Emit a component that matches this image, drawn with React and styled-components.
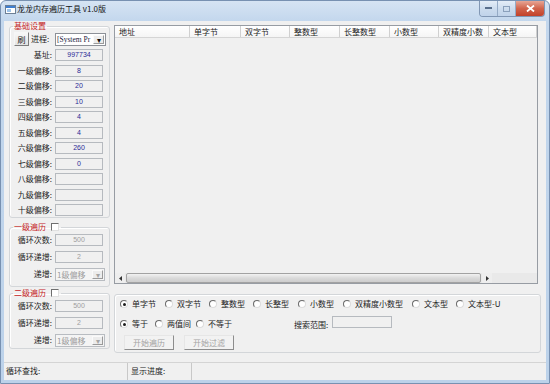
import React from "react";
import styled, { createGlobalStyle } from "styled-components";

const GlobalStyle = createGlobalStyle`
  html, body {
    margin: 0;
    padding: 0;
    width: 550px;
    height: 384px;
    overflow: hidden;
  }
  body {
    font-family: "Noto Sans CJK SC", "Liberation Sans", sans-serif;
    font-size: 8px;
    color: #1c1c1c;
  }
`;

const offsets = [
  ["基址:", "997734"],
  ["一级偏移:", "8"],
  ["二级偏移:", "20"],
  ["三级偏移:", "10"],
  ["四级偏移:", "4"],
  ["五级偏移:", "4"],
  ["六级偏移:", "260"],
  ["七级偏移:", "0"],
  ["八级偏移:", ""],
  ["九级偏移:", ""],
  ["十级偏移:", ""],
];

const columns = [
  ["地址", 75],
  ["单字节", 51],
  ["双字节", 49],
  ["整数型", 50],
  ["长整数型", 50],
  ["小数型", 49],
  ["双精度小数", 50],
  ["文本型", 48],
];

const typeRadios = [
  ["单字节", 45, true],
  ["双字节", 44],
  ["整数型", 44],
  ["长整型", 45],
  ["小数型", 45],
  ["双精度小数型", 69],
  ["文本型", 44],
  ["文本型-U", 60],
];

const App = () => {
  return (
    <>
      <GlobalStyle />
      <Frame>
        <TitleBar>
          <AppIcon width="11" height="9" viewBox="0 0 11 9">
            <rect x="0.5" y="0.5" width="10" height="8" fill="#fff" stroke="#6d7f95" />
            <rect x="1" y="1" width="9" height="2" fill="#3f7fd0" />
            <rect x="2" y="4" width="4" height="3" fill="#9cc3ea" />
          </AppIcon>
          <Caption>龙龙内存遍历工具 v1.0版</Caption>
          <CaptionButtons>
            <CapBtn $w={17} $left>
              <svg width="7" height="3" viewBox="0 0 7 3">
                <rect x="0" y="0" width="7" height="2" fill="#596f8c" />
              </svg>
            </CapBtn>
            <CapBtn $w={17}>
              <svg width="7" height="6" viewBox="0 0 7 6">
                <rect x="0.5" y="0.5" width="6" height="5" fill="none" stroke="#8aa0bb" />
              </svg>
            </CapBtn>
            <CloseBtn>
              <svg width="9" height="7" viewBox="0 0 9 7">
                <path d="M1 0.5 L8 6.5 M8 0.5 L1 6.5" stroke="#fff" strokeWidth="1.8" />
              </svg>
            </CloseBtn>
          </CaptionButtons>
        </TitleBar>
        <Client>
          <Main>
            <LeftCol>
              <Group $pt={1} $pb={1}>
                <Legend>基础设置</Legend>
                <ProcRow>
                  <SmallBtn>刷</SmallBtn>
                  <ProcLabel>进程:</ProcLabel>
                  <Combo $w={51}>
                    <ComboText $mono>[System Pr</ComboText>
                    <ComboArrow>▾</ComboArrow>
                  </Combo>
                </ProcRow>
                <FieldGrid $gap={3.5}>
                  {offsets.map(([label, value]) => (
                    <React.Fragment key={label}>
                      <Label>{label}</Label>
                      <Field>{value}</Field>
                    </React.Fragment>
                  ))}
                </FieldGrid>
              </Group>

              <Group $mt={4} $pt={2} $pb={6}>
                <Legend>
                  一级遍历
                  <Check />
                </Legend>
                <FieldGrid $gap={5}>
                  <Label>循环次数:</Label>
                  <Field $disabled>500</Field>
                  <Label>循环递增:</Label>
                  <Field $disabled>2</Field>
                  <Label>递增:</Label>
                  <Combo $w={50} $disabled>
                    <ComboText $disabled>1级偏移</ComboText>
                    <ComboArrow $disabled>▾</ComboArrow>
                  </Combo>
                </FieldGrid>
              </Group>

              <Group $mt={1} $pt={2} $pb={2}>
                <Legend>
                  二级遍历
                  <Check />
                </Legend>
                <FieldGrid $gap={5}>
                  <Label>循环次数:</Label>
                  <Field $disabled>500</Field>
                  <Label>循环递增:</Label>
                  <Field $disabled>2</Field>
                  <Label>递增:</Label>
                  <Combo $w={50} $disabled>
                    <ComboText $disabled>1级偏移</ComboText>
                    <ComboArrow $disabled>▾</ComboArrow>
                  </Combo>
                </FieldGrid>
              </Group>
            </LeftCol>

            <RightCol>
              <List>
                <Header>
                  {columns.map(([name, w]) => (
                    <HeadCell key={name} $w={w}>
                      {name}
                    </HeadCell>
                  ))}
                </Header>
                <ListBody />
                <HScroll>
                  <ScrollArrow>
                    <svg width="3" height="5" viewBox="0 0 3 5">
                      <path d="M3 0 L0 2.5 L3 5 Z" fill="#333" />
                    </svg>
                  </ScrollArrow>
                  <Thumb />
                  <ScrollArrow>
                    <svg width="3" height="5" viewBox="0 0 3 5">
                      <path d="M0 0 L3 2.5 L0 5 Z" fill="#333" />
                    </svg>
                  </ScrollArrow>
                </HScroll>
              </List>

              <SearchBox>
                <RadioRow>
                  {typeRadios.map(([name, w, on]) => (
                    <Radio key={name} $w={w}>
                      <RadioDot $on={on} />
                      {name}
                    </Radio>
                  ))}
                </RadioRow>
                <RadioRow>
                  <Radio $w={35}>
                    <RadioDot $on />
                    等于
                  </Radio>
                  <Radio $w={41}>
                    <RadioDot />
                    两值间
                  </Radio>
                  <Radio $w={98}>
                    <RadioDot />
                    不等于
                  </Radio>
                  <RangeLabel>搜索范围:</RangeLabel>
                  <RangeInput />
                </RadioRow>
                <ButtonRow>
                  <ActionBtn>开始遍历</ActionBtn>
                  <ActionBtn>开始过滤</ActionBtn>
                </ButtonRow>
              </SearchBox>
            </RightCol>
          </Main>

          <StatusBar>
            <StatusPanel $w={124} $pl={2}>循环查找:</StatusPanel>
            <StatusPanel $w={64} $pl={3}>显示进度:</StatusPanel>
            <StatusPanel $grow />
          </StatusBar>
        </Client>
      </Frame>
    </>
  );
};

const Frame = styled.div`
  width: 550px;
  height: 384px;
  box-sizing: border-box;
  display: flex;
  flex-direction: column;
  padding: 0 3px 3px;
  border: 1px solid #7891b1;
  border-radius: 6px 6px 0 0;
  background: linear-gradient(#d6e4f3, #c3d7ed 20px, #bcd2ea);
`;

const TitleBar = styled.div`
  height: 20px;
  flex: none;
  display: flex;
  align-items: flex-start;
`;

const AppIcon = styled.svg`
  flex: none;
  margin: 4px 1px 0 1px;
`;

const Caption = styled.span`
  flex: 1;
  margin-top: 3px;
  line-height: 10px;
  font-size: 8px;
  color: #141414;
  white-space: nowrap;
`;

const CaptionButtons = styled.div`
  display: flex;
  height: 15px;
  margin-right: 1px;
  border: 1px solid #8197b4;
  border-top: 0;
  border-radius: 0 0 4px 4px;
  overflow: hidden;
`;

const CapBtn = styled.div`
  width: ${(p) => p.$w}px;
  display: flex;
  align-items: center;
  justify-content: center;
  background: linear-gradient(#e4edf7, #cbdbed 55%, #c0d3ea);
  border-right: 1px solid #95abc6;
`;

const CloseBtn = styled.div`
  width: 28px;
  display: flex;
  align-items: center;
  justify-content: center;
  background: linear-gradient(#e7a695, #d1644c 50%, #c2412a);
`;

const Client = styled.div`
  flex: 1;
  min-height: 0;
  display: flex;
  flex-direction: column;
  background: #f0f0f0;
`;

const Main = styled.div`
  flex: 1;
  min-height: 0;
  display: flex;
  gap: 4px;
  padding-left: 5px;
`;

const LeftCol = styled.div`
  width: 101px;
  flex: none;
  display: flex;
  flex-direction: column;
`;

const RightCol = styled.div`
  width: 427px;
  flex: none;
  display: flex;
  flex-direction: column;
`;

const Group = styled.fieldset`
  margin: ${(p) => p.$mt || 0}px 0 0;
  padding: ${(p) => p.$pt}px 0 ${(p) => p.$pb}px;
  min-width: 0;
  border: 1px solid #d3d6d9;
  border-radius: 3px;
  box-shadow: inset 1px 1px 0 #fff;
`;

const Legend = styled.legend`
  margin-left: 3px;
  padding: 0 1px;
  display: flex;
  align-items: center;
  line-height: 10px;
  font-size: 8px;
  color: #c4231f;
`;

const Check = styled.span`
  width: 6px;
  height: 6px;
  margin-left: 5px;
  margin-right: 1px;
  background: #fff;
  border: 1px solid;
  border-color: #6e6e6e #e0e0e0 #e0e0e0 #6e6e6e;
`;

const ProcRow = styled.div`
  display: flex;
  align-items: center;
  height: 14px;
  padding-left: 4px;
  margin-bottom: 3px;
`;

const SmallBtn = styled.div`
  width: 15px;
  height: 14px;
  box-sizing: border-box;
  display: flex;
  align-items: center;
  justify-content: center;
  border: 1px solid;
  border-color: #f6f6f6 #7c7c7c #7c7c7c #f6f6f6;
  background: linear-gradient(#f7f7f7, #e3e3e3);
  font-size: 8px;
`;

const ProcLabel = styled.span`
  width: 24px;
  margin-left: 2px;
  line-height: 14px;
  white-space: nowrap;
`;

const Combo = styled.div`
  width: ${(p) => p.$w}px;
  height: 13px;
  box-sizing: border-box;
  display: flex;
  align-items: stretch;
  border: 1px solid ${(p) => (p.$disabled ? "#b8bcc1" : "#8c9097")};
  background: ${(p) => (p.$disabled ? "#f4f4f4" : "#fff")};
`;

const ComboText = styled.span`
  flex: 1;
  overflow: hidden;
  white-space: nowrap;
  padding-left: 1px;
  line-height: 11px;
  font-family: ${(p) =>
    p.$mono ? '"Liberation Serif", serif' : '"Noto Sans CJK SC", sans-serif'};
  font-size: ${(p) => (p.$mono ? 7.5 : 8)}px;
  color: ${(p) => (p.$disabled ? "#9c9c9c" : "#1a1a40")};
`;

const ComboArrow = styled.span`
  width: 9px;
  margin: 1px;
  display: flex;
  align-items: center;
  justify-content: center;
  border: 1px solid;
  border-color: #fafafa #9a9a9a #9a9a9a #fafafa;
  background: #ececec;
  font-size: 8px;
  color: ${(p) => (p.$disabled ? "#a5a5a5" : "#111")};
`;

const FieldGrid = styled.div`
  display: grid;
  grid-template-columns: 42px 50px;
  grid-auto-rows: 12px;
  column-gap: 3px;
  row-gap: ${(p) => p.$gap}px;
  align-items: center;
`;

const Label = styled.span`
  text-align: right;
  white-space: nowrap;
  line-height: 12px;
  font-size: 8px;
`;

const Field = styled.div`
  width: 48px;
  height: 12px;
  box-sizing: border-box;
  border: 1px solid #b6babf;
  background: #f0f0f0;
  text-align: center;
  line-height: 10px;
  font-family: "Liberation Sans", sans-serif;
  font-size: 7px;
  color: ${(p) => (p.$disabled ? "#9e9e9e" : "#2b2b96")};
`;

const List = styled.div`
  margin-top: 4px;
  width: 424px;
  height: 259px;
  box-sizing: border-box;
  display: flex;
  flex-direction: column;
  border: 1px solid #979ca3;
  background: #f0f0f0;
`;

const Header = styled.div`
  flex: none;
  height: 11px;
  display: flex;
  border-bottom: 1px solid #d5d5d5;
  background: linear-gradient(#ffffff, #f5f5f5);
`;

const HeadCell = styled.div`
  width: ${(p) => p.$w}px;
  flex: none;
  box-sizing: border-box;
  padding-left: 4px;
  border-right: 1px solid #d0d0d0;
  line-height: 11px;
  font-size: 8px;
  white-space: nowrap;
  overflow: hidden;
`;

const ListBody = styled.div`
  flex: 1;
`;

const HScroll = styled.div`
  flex: none;
  height: 10px;
  display: flex;
  background: #e9e9e9;
`;

const ScrollArrow = styled.div`
  width: 10px;
  flex: none;
  display: flex;
  align-items: center;
  justify-content: center;
  background: #eeeeee;
`;

const Thumb = styled.div`
  width: 355px;
  margin: 0 1px;
  box-sizing: border-box;
  border: 1px solid #a2a2a2;
  border-radius: 2px;
  background: linear-gradient(#f2f2f2, #dadada 50%, #cdcdcd);
`;

const SearchBox = styled.div`
  margin-top: 10px;
  height: 59px;
  box-sizing: border-box;
  display: flex;
  flex-direction: column;
  padding: 4px 0 0 5px;
  border: 1px solid #d3d6d9;
  border-radius: 3px;
  box-shadow: inset 1px 1px 0 #fff;
`;

const RadioRow = styled.div`
  display: flex;
  align-items: center;
  height: 10px;
  margin-bottom: 10px;
  white-space: nowrap;
`;

const Radio = styled.label`
  width: ${(p) => p.$w}px;
  flex: none;
  display: flex;
  align-items: center;
  font-size: 8px;
  line-height: 10px;
`;

const RadioDot = styled.span`
  width: 8px;
  height: 8px;
  box-sizing: border-box;
  flex: none;
  margin-right: 4px;
  display: flex;
  align-items: center;
  justify-content: center;
  border: 1px solid;
  border-color: #6a6a6a #dcdcdc #dcdcdc #6a6a6a;
  border-radius: 50%;
  background: #fff;
  &::after {
    content: "";
    width: 3px;
    height: 3px;
    border-radius: 50%;
    background: ${(p) => (p.$on ? "#1e1e1e" : "transparent")};
  }
`;

const RangeLabel = styled.span`
  width: 38px;
  flex: none;
  font-size: 8px;
`;

const RangeInput = styled.div`
  width: 60px;
  height: 12px;
  margin-top: -4px;
  box-sizing: border-box;
  border: 1px solid #b6babf;
  background: #f0f0f0;
`;

const ButtonRow = styled.div`
  display: flex;
  gap: 10px;
  margin-top: -4px;
  padding-left: 4px;
`;

const ActionBtn = styled.div`
  width: 50px;
  height: 15px;
  box-sizing: border-box;
  display: flex;
  align-items: center;
  justify-content: center;
  border: 1px solid;
  border-color: #e6e6e6 #8d8d8d #8d8d8d #e6e6e6;
  background: #f2f2f2;
  font-size: 8px;
  color: #a3a3a3;
`;

const StatusBar = styled.div`
  height: 18px;
  flex: none;
  box-sizing: border-box;
  display: flex;
  border-top: 1px solid #d4d4d4;
  margin-top: 1px;
`;

const StatusPanel = styled.div`
  width: ${(p) => (p.$grow ? "auto" : `${p.$w}px`)};
  flex: ${(p) => (p.$grow ? 1 : "none")};
  box-sizing: border-box;
  padding-left: ${(p) => p.$pl || 0}px;
  border-right: ${(p) => (p.$grow ? "0" : "1px solid #c8c8c8")};
  line-height: 16px;
  font-size: 8px;
  white-space: nowrap;
`;

export default App;
